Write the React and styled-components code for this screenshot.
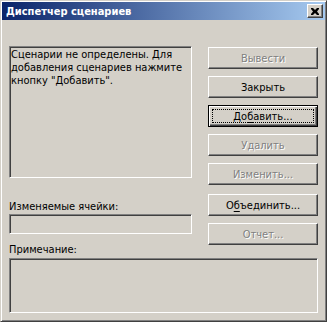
import styled, { createGlobalStyle } from "styled-components";

const GlobalStyle = createGlobalStyle`
    html, body {
        margin: 0;
        padding: 0;
        background: #D4D0C8;
    }
    body {
        font-family: "DejaVu Sans Condensed", "DejaVu Sans", sans-serif;
        font-stretch: condensed;
        font-size: 11px;
        color: #000;
    }
`;

export default function App() {
    return (
        <>
            <GlobalStyle />
            <Window>
                <TitleBar>
                    <Title>Диспетчер сценариев</Title>
                    <CloseButton>
                        <svg width="8" height="7" viewBox="0 0 8 7">
                            <path d="M0 0h2l2 2 2-2h2v1L6 3.5 8 6v1H6L4 5 2 7H0V6l2-2.5L0 1z" fill="#000" />
                        </svg>
                    </CloseButton>
                </TitleBar>
                <Body>
                    <TopRow>
                        <LeftCol>
                            <ListBox>
                                Сценарии не определены. Для<br />
                                добавления сценариев нажмите<br />
                                кнопку "Добавить".
                            </ListBox>
                            <FieldLabel>Изменяемые ячейки:</FieldLabel>
                            <TextField />
                        </LeftCol>
                        <ButtonCol>
                            <Button $disabled>Вывести</Button>
                            <Button>Закрыть</Button>
                            <Button $focused>До<u>б</u>авить...</Button>
                            <Button $disabled>Удалить</Button>
                            <Button $disabled>Изменить...</Button>
                            <Button $extraGap>О<u>б</u>ъединить...</Button>
                            <Button $disabled>Отчет...</Button>
                        </ButtonCol>
                    </TopRow>
                    <NoteLabel>Примечание:</NoteLabel>
                    <NoteBox />
                </Body>
            </Window>
        </>
    );
}

const Window = styled.div`
    width: 327px;
    height: 322px;
    box-sizing: border-box;
    padding: 1px;
    border: 1px solid;
    border-color: #D4D0C8 #404040 #404040 #D4D0C8;
    box-shadow: inset 1px 1px #fff, inset -1px -1px #808080;
    background: #D4D0C8;
    display: flex;
    flex-direction: column;
`;

const TitleBar = styled.div`
    height: 18px;
    display: flex;
    align-items: center;
    padding: 0 2px 0 4px;
    background: linear-gradient(to right, #0A246A, #A6CAF0);
    color: #fff;
`;

const Title = styled.div`
    flex: 1;
    font-weight: bold;
    font-size: 11px;
    line-height: 13px;
`;

const CloseButton = styled.div`
    width: 16px;
    height: 14px;
    box-sizing: border-box;
    border: 1px solid;
    border-color: #fff #404040 #404040 #fff;
    box-shadow: inset -1px -1px #808080;
    background: #D4D0C8;
    display: flex;
    align-items: center;
    justify-content: center;
`;

const Body = styled.div`
    flex: 1;
    padding: 26px 7px 7px 7px;
    display: flex;
    flex-direction: column;
`;

const TopRow = styled.div`
    display: grid;
    grid-template-columns: 183px 110px;
    column-gap: 16px;
    height: 197px;
`;

const LeftCol = styled.div`
    display: flex;
    flex-direction: column;
`;

const Sunken = styled.div`
    box-sizing: border-box;
    border: 1px solid;
    border-color: #808080 #fff #fff #808080;
    box-shadow: inset 1px 1px #404040, inset -1px -1px #D4D0C8;
    background: #D4D0C8;
`;

const ListBox = styled(Sunken)`
    height: 132px;
    padding: 1px 1px;
    line-height: 13px;
`;

const FieldLabel = styled.div`
    margin-top: 22px;
    line-height: 13px;
`;

const TextField = styled(Sunken)`
    margin-top: 1px;
    height: 20px;
`;

const ButtonCol = styled.div`
    display: flex;
    flex-direction: column;
    gap: 7px;
    padding-top: 1px;
`;

const Button = styled.div`
    position: relative;
    height: 22px;
    box-sizing: border-box;
    border: 1px solid;
    border-color: ${p => (p.$focused ? "#000" : "#fff #404040 #404040 #fff")};
    box-shadow: ${p =>
        p.$focused
            ? "inset 1px 1px #fff, inset -1px -1px #404040, inset -2px -2px #808080"
            : "inset -1px -1px #808080"};
    display: flex;
    align-items: center;
    justify-content: center;
    line-height: 13px;
    margin-top: ${p => (p.$extraGap ? "2px" : "0")};
    color: ${p => (p.$disabled ? "#808080" : "#000")};
    text-shadow: ${p => (p.$disabled ? "1px 1px 0 #fff" : "none")};

    &::after {
        content: "";
        display: ${p => (p.$focused ? "block" : "none")};
        position: absolute;
        inset: 3px;
        border: 1px dotted #000;
    }

    u {
        text-decoration-thickness: 1px;
        text-underline-offset: 2px;
    }
`;

const NoteLabel = styled.div`
    line-height: 13px;
    margin-bottom: 2px;
`;

const NoteBox = styled(Sunken)`
    height: 55px;
`;
